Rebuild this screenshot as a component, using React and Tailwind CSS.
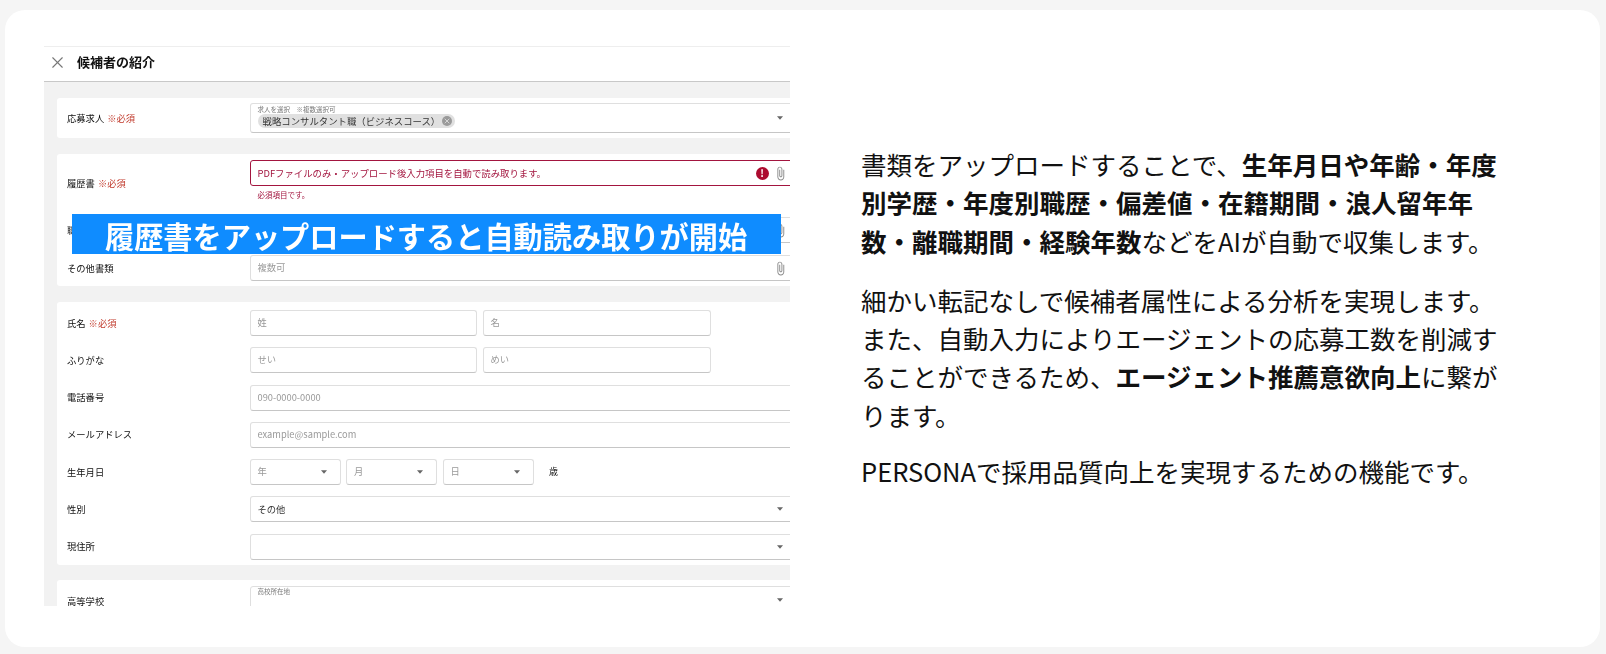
import React from "react";
import { X } from "lucide-react";

function Caret({ className = "" }) {
  return (
    <svg width="6" height="4" viewBox="0 0 7 4" className={className}>
      <path d="M0 0h7L3.5 4z" fill="#666" />
    </svg>
  );
}

function Clip() {
  return (
    <svg width="15" height="15" viewBox="0 0 24 24" className="shrink-0">
      <path
        fill="#8a8a8a"
        d="M16.5 6v11.5c0 2.21-1.79 4-4 4s-4-1.79-4-4V5c0-1.38 1.12-2.5 2.5-2.5s2.5 1.12 2.5 2.5v10.5c0 .55-.45 1-1 1s-1-.45-1-1V6H10v9.5c0 1.38 1.12 2.5 2.5 2.5s2.5-1.12 2.5-2.5V5c0-2.21-1.79-4-4-4S7 2.79 7 5v12.5c0 3.04 2.46 5.5 5.5 5.5s5.5-2.46 5.5-5.5V6h-1.5z"
      />
    </svg>
  );
}

function Row({ label, required, children, className = "" }) {
  return (
    <div className={"flex items-center " + className}>
      <div className="w-[182.5px] shrink-0 pt-[1px] text-[9.3px] text-[#111]">
        {label}
        {required && <span className="ml-[3px] text-[#c0392b]">※必須</span>}
      </div>
      {children}
    </div>
  );
}

function Field({ text, dark, caret, clip, className = "w-[545px] pr-[11px]" }) {
  return (
    <div
      className={
        "flex h-[26px] shrink-0 items-center justify-between rounded-[3px] border border-[#dfdfdf] border-b-[#c6c6c6] bg-white pl-[7px] text-[9.3px] " +
        (dark ? "text-[#333] " : "text-[#999] ") +
        className
      }
    >
      <span>{text}</span>
      {caret && <Caret />}
      {clip && <Clip />}
    </div>
  );
}

function CandidateForm() {
  return (
    <div className="relative h-[560px] w-[746px] shrink-0 overflow-hidden bg-[#f2f2f2] blur-[0.4px] font-['Noto_Sans_CJK_JP',sans-serif]">
      <div className="flex h-[36px] items-center border-t border-b border-t-[#eeeeee] border-b-[#c8c8c8] bg-white pb-[4px] pl-[4px]">
        <X size={19} strokeWidth={1.4} className="text-[#777]" />
        <span className="ml-[10px] text-[13px] font-bold text-[#111]">候補者の紹介</span>
      </div>

      <div className="flex flex-col gap-[16px] pl-[13px] pt-[16px]">
        <div className="rounded-l-[3px] bg-white py-[5px] pl-[10px]">
          <Row label="応募求人" required>
            <div className="flex h-[30px] w-[545px] shrink-0 items-start justify-between rounded-[3px] border border-[#dfdfdf] border-b-[#c6c6c6] pl-[7px] pr-[11px]">
              <div>
                <div className="mt-[1px] h-[9px] text-[6.5px] leading-[9px] text-[#777]">求人を選択　※複数選択可</div>
                <div className="flex h-[14px] w-[197px] items-center justify-between rounded-full bg-[#e0e0e0] pl-[5px] pr-[3px] text-[9.4px] text-[#333]">
                  <span className="whitespace-nowrap">戦略コンサルタント職（ビジネスコース）</span>
                  <span className="flex h-[10px] w-[10px] shrink-0 items-center justify-center rounded-full bg-[#9a9a9a]">
                    <X size={8} strokeWidth={2.5} className="text-[#e0e0e0]" />
                  </span>
                </div>
              </div>
              <Caret className="mt-[12px]" />
            </div>
          </Row>
        </div>

        <div className="h-[132px] rounded-l-[3px] bg-white pl-[10px] pt-[6px]">
          <Row label="履歴書" required className="h-[46px]">
            <div className="h-[46px] shrink-0">
              <div className="flex h-[26px] w-[545px] items-center justify-between rounded-[3px] border border-[#a3153f] pl-[7px] pr-[6px] text-[9.4px] text-[#a3153f]">
                <span>PDFファイルのみ・アップロード後入力項目を自動で読み取ります。</span>
                <span className="flex items-center gap-[4px]">
                  <span className="flex h-[13px] w-[13px] items-center justify-center rounded-full bg-[#ac0b2f] text-[10px] font-bold leading-none text-white">!</span>
                  <Clip />
                </span>
              </div>
              <div className="ml-[8px] mt-[3px] text-[7.5px] text-[#a3153f]">必須項目です。</div>
            </div>
          </Row>
          <Row label="職務経歴書" className="mt-[11px]">
            <Field text="" clip className="w-[545px] pr-[6px]" />
          </Row>
          <Row label="その他書類" className="mt-[12px]">
            <Field text="複数可" clip className="w-[545px] pr-[6px]" />
          </Row>
        </div>

        <div className="mb-[-1px] flex h-[263px] flex-col gap-[11.3px] rounded-l-[3px] bg-white pl-[10px] pt-[8px]">
          <Row label="氏名" required>
            <div className="flex gap-[6px]">
              <Field text="姓" className="w-[227px]" />
              <Field text="名" className="w-[228px]" />
            </div>
          </Row>
          <Row label="ふりがな">
            <div className="flex gap-[6px]">
              <Field text="せい" className="w-[227px]" />
              <Field text="めい" className="w-[228px]" />
            </div>
          </Row>
          <Row label="電話番号">
            <Field text="090-0000-0000" />
          </Row>
          <Row label="メールアドレス">
            <Field text="example@sample.com" />
          </Row>
          <Row label="生年月日">
            <div className="flex items-center gap-[5.5px]">
              <Field text="年" caret className="w-[91px] pr-[13px]" />
              <Field text="月" caret className="w-[91px] pr-[13px]" />
              <Field text="日" caret className="w-[91px] pr-[13px]" />
              <span className="ml-[10px] text-[9px] text-[#111]">歳</span>
            </div>
          </Row>
          <Row label="性別">
            <Field text="その他" dark caret />
          </Row>
          <Row label="現住所">
            <Field text="" caret />
          </Row>
        </div>

        <div className="rounded-l-[3px] bg-white pl-[10px] pt-[6px]">
          <Row label="高等学校">
            <div className="flex h-[30px] w-[545px] shrink-0 items-start justify-between rounded-[3px] border border-[#dfdfdf] pl-[7px] pr-[11px]">
              <span className="text-[6.5px] leading-[9px] text-[#777]">高校所在地</span>
              <Caret className="mt-[11px]" />
            </div>
          </Row>
        </div>
      </div>

      <div className="absolute left-[28px] top-[168px] flex h-[40px] w-[709px] items-center whitespace-nowrap bg-[#0f8cff] pl-[33px] pt-[3px] text-[29.2px] font-bold leading-none text-white">
        履歴書をアップロードすると自動読み取りが開始
      </div>
    </div>
  );
}

export default function App() {
  return (
    <div className="h-[654px] bg-[#f5f5f5] pb-[7px] pl-[5px] pr-[6px] pt-[10px]">
      <div className="flex h-full rounded-[20px] bg-white pl-[39px] pt-[36px]">
        <CandidateForm />
        <div className="ml-[71px] mt-[99px] w-[645px] text-[25.5px] leading-[38.25px] text-[#111] font-['Noto_Sans_CJK_JP',sans-serif]">
          <p className="mb-[21px]">
            書類をアップロードすることで、<b>生年月日や年齢・年度別学歴・年度別職歴・偏差値・在籍期間・浪人留年年数・離職期間・経験年数</b>などをAIが自動で収集します。
          </p>
          <p className="mb-[18.5px]">
            細かい転記なしで候補者属性による分析を実現します。また、自動入力によりエージェントの応募工数を削減することができるため、<b>エージェント推薦意欲向上</b>に繋がります。
          </p>
          <p>PERSONAで採用品質向上を実現するための機能です。</p>
        </div>
      </div>
    </div>
  );
}
